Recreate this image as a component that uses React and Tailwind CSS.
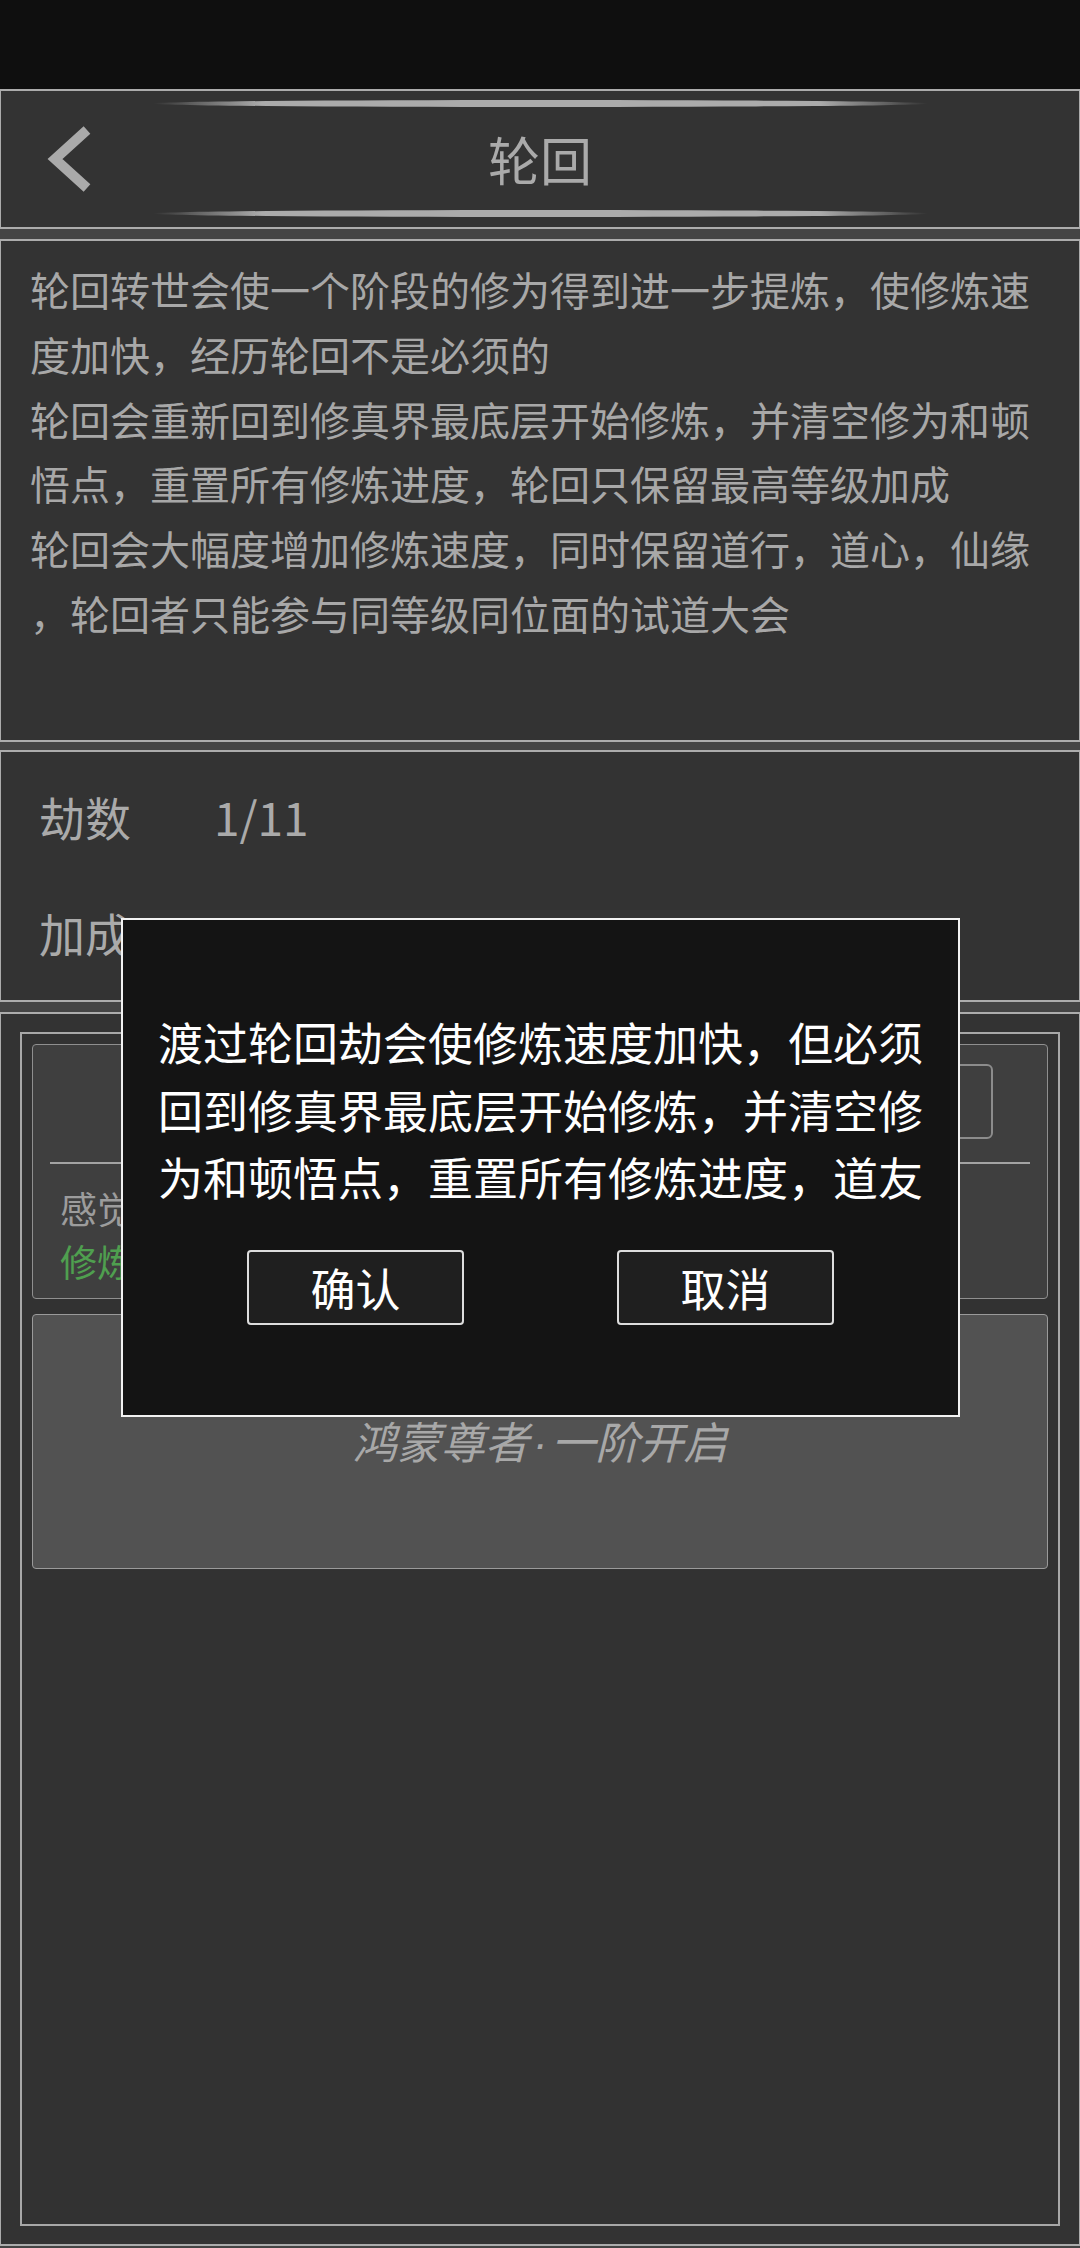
export default function App() {
  const desc = [
    "轮回转世会使一个阶段的修为得到进一步提炼，使修炼速",
    "度加快，经历轮回不是必须的",
    "轮回会重新回到修真界最底层开始修炼，并清空修为和顿",
    "悟点，重置所有修炼进度，轮回只保留最高等级加成",
    "轮回会大幅度增加修炼速度，同时保留道行，道心，仙缘",
    "，轮回者只能参与同等级同位面的试道大会",
  ];
  const modal = [
    "渡过轮回劫会使修炼速度加快，但必须",
    "回到修真界最底层开始修炼，并清空修",
    "为和顿悟点，重置所有修炼进度，道友",
  ];
  return (
    <div className="relative w-[1080px] h-[2248px] overflow-hidden bg-[#444444] font-['Noto_Sans_CJK_SC','Noto_Sans',sans-serif]">
      <div className="h-[89px] bg-[#0f0f0f]" />

      {/* header */}
      <div className="h-[140px] bg-[#333333] border-y-2 border-x border-[#acacac] flex flex-col pt-[9px] pb-[10px]">
        <div className="mx-auto w-[775px] h-[7px] rounded-[50%] bg-[linear-gradient(90deg,transparent,#ababab_14%,#ababab_86%,transparent)]" />
        <div className="h-[103px] grid grid-cols-[1fr_auto_1fr] items-center">
          <svg width="100" height="103" viewBox="0 0 100 103">
            <polyline points="86,23 54,52 86,81" fill="none" stroke="#aaaaaa" strokeWidth="10" strokeLinecap="butt" strokeLinejoin="miter" />
          </svg>
          <div className="text-[52px] leading-none text-[#aaaaaa]">轮回</div>
          <div />
        </div>
        <div className="mx-auto w-[775px] h-[7px] rounded-[50%] bg-[linear-gradient(90deg,transparent,#ababab_14%,#ababab_86%,transparent)]" />
      </div>

      {/* description */}
      <div className="mt-[10px] h-[503px] bg-[#333333] border-y-2 border-x border-[#acacac] pl-[29px] pt-[16px] text-[40px] leading-[64.8px] text-[#a8a8a8]">
        {desc.map((l, i) => (
          <div key={i} className="whitespace-nowrap">{l}</div>
        ))}
      </div>

      {/* stats */}
      <div className="mt-[8px] h-[252px] bg-[#333333] border-y-2 border-x border-[#acacac] pl-[38px] pt-[6px] text-[46px] text-[#aaaaaa]">
        <div className="h-[116px] flex items-center">
          <div className="w-[175px]">劫数</div>
          <div>1/11</div>
        </div>
        <div className="h-[116px] flex items-center">
          <div className="w-[175px]">加成</div>
          <div></div>
        </div>
      </div>

      {/* bottom */}
      <div className="mt-[10px] h-[1234px] bg-[#333333] border-y-2 border-x border-[#acacac] px-[19px] py-[18px]">
        <div className="h-full border-2 border-[#a8a8a8] bg-[#323232] p-[10px] flex flex-col gap-[15px]">
          <div className="h-[255px] bg-[#3f3f3f] border border-[#8f8f8f] rounded-[4px] flex flex-col pt-[19px]">
            <div className="flex justify-end pr-[54px]">
              <div className="w-[220px] h-[75px] border-2 border-[#8c8c8c] rounded-[6px]" />
            </div>
            <div className="mt-[23px] mx-[17px] h-[2px] bg-[#a3a3a3]" />
            <div className="mt-[18px] pl-[27px] text-[37px] leading-[53px]">
              <div className="text-[#9c9c9c]">感觉</div>
              <div className="text-[#4f9f4f]">修炼</div>
            </div>
          </div>
          <div className="h-[255px] bg-[#525252] border border-[#9a9a9a] rounded-[4px] flex items-center justify-center">
            <div className="italic text-[44px] text-[#a8a8a8] whitespace-nowrap">
              鸿蒙尊者<span className="font-['Liberation_Sans',sans-serif] mx-[4px]">·</span>一阶开启
            </div>
          </div>
        </div>
      </div>

      {/* modal */}
      <div className="absolute left-[121px] top-[918px] w-[839px] h-[499px] bg-[#141414] border-2 border-[#f2f2f2] flex flex-col items-center pt-[88px]">
        <div className="text-[45px] leading-[67.5px] text-white">
          {modal.map((l, i) => (
            <div key={i} className="whitespace-nowrap">{l}</div>
          ))}
        </div>
        <div className="mt-[39px] flex gap-[153px]">
          <div className="w-[217px] h-[75px] bg-[#1f1f1f] border-2 border-[#dddddd] rounded-[4px] flex items-center justify-center text-[45px] text-white leading-none">确认</div>
          <div className="w-[217px] h-[75px] bg-[#1f1f1f] border-2 border-[#dddddd] rounded-[4px] flex items-center justify-center text-[45px] text-white leading-none">取消</div>
        </div>
      </div>
    </div>
  );
}
